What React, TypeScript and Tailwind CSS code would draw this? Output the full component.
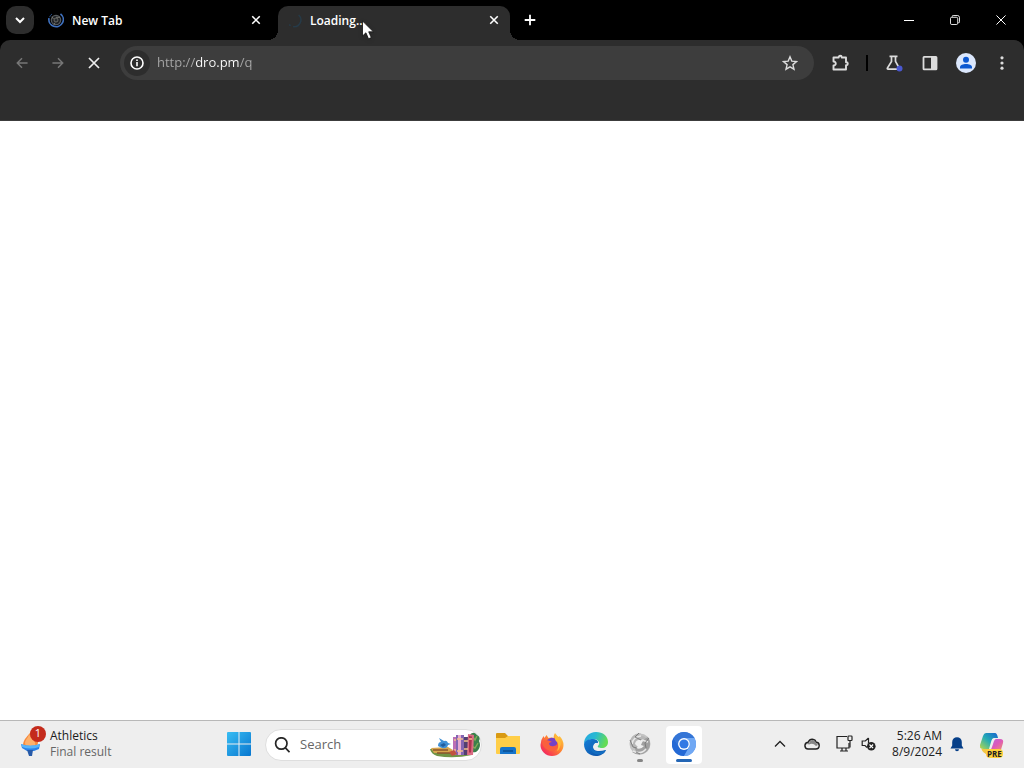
import React, { useState } from "react";

function CrossIcon({ className, weight }: { className: string; weight: number }) {
  return (
    <svg viewBox="0 0 16 16" className={className} fill="none" stroke="currentColor" strokeWidth={weight} aria-hidden="true">
      <path d="M3 3l10 10M13 3L3 13" />
    </svg>
  );
}

function TabStrip() {
  return (
    <header className="flex h-10 bg-black text-white">
      <button aria-label="Search tabs" className="ml-1.5 mt-1.5 flex size-7 items-center justify-center rounded-[10px] bg-[#2d2d2d]">
        <svg viewBox="0 0 12 12" className="size-3" fill="none" stroke="currentColor" strokeWidth="2" aria-hidden="true">
          <path d="M2 4l4 4 4-4" />
        </svg>
      </button>
      <div className="flex" aria-label="Open tabs">
        <div className="flex w-[234px] items-center pl-3.5 pr-1">
          <svg viewBox="0 0 16 16" className="mr-2 size-4 shrink-0" fill="none" aria-hidden="true">
            <circle cx="8" cy="8" r="4.7" fill="#202225" stroke="#555a5e" strokeWidth="1.2" />
            <path d="M8 5.3h4M5.4 7L4 4.7M7 10.7l-1 2" stroke="#73756f" strokeWidth="1" />
            <circle cx="8" cy="8" r="2" fill="#25292f" stroke="#777970" strokeWidth=".8" />
            <path d="M12.500 1.800A7.200 7.200 0 1 1 1 6.200" stroke="#3f71bf" strokeWidth="1.700" />
            <path d="M1.500 5.200A7 7 0 0 1 4 2" stroke="#284d85" strokeWidth="1" />
          </svg>
          <button className="flex-1 pt-px text-left text-xs font-semibold">New Tab</button>
          <button aria-label="Close New Tab" className="flex size-4 items-center justify-center">
            <CrossIcon className="size-3" weight={2.1} />
          </button>
        </div>
        <span className="h-2.5 w-2.5 self-end bg-[radial-gradient(circle_at_0_0,transparent_10px,#2d2d2d_10px)]" />
        <div className="mt-1.5 flex w-[232px] items-center rounded-t-[10px] bg-[#2d2d2d] pb-1.5 pl-2 pr-2">
          <svg viewBox="0 0 16 16" className="mr-2 size-4 shrink-0" fill="none" stroke="#263b49" strokeWidth="1.4" aria-hidden="true">
            <path d="M12.600 3A6.700 6.700 0 0 1 7 14.600M4.600 13.600l-1.400-1" />
          </svg>
          <button aria-current="page" className="relative flex-1 pt-px text-left text-xs font-semibold">
            Loading...
            <svg viewBox="0 0 14 21" className="pointer-events-none absolute left-[51px] top-2 h-[21px] w-3.5 drop-shadow-sm" aria-hidden="true">
              <path d="M1.500 1v15l3.400-3.200 2.600 6 2.800-1.200-2.600-5.800h4.700z" fill="#fff" stroke="#111" strokeWidth=".8" />
            </svg>
          </button>
          <button aria-label="Close Loading tab" className="flex size-4 items-center justify-center">
            <CrossIcon className="size-3" weight={2.1} />
          </button>
        </div>
        <span className="h-2.5 w-2.5 self-end bg-[radial-gradient(circle_at_100%_0,transparent_10px,#2d2d2d_10px)]" />
      </div>
      <button aria-label="New tab" className="flex w-5 items-center justify-center">
        <svg viewBox="0 0 12 12" className="size-3" stroke="currentColor" strokeWidth="1.8" aria-hidden="true">
          <path d="M6 .7v10.600M.7 6h10.600" />
        </svg>
      </button>
      <div className="ml-auto flex">
        <button aria-label="Minimize" className="flex w-[46px] items-center justify-center">
          <svg viewBox="0 0 10 10" className="size-2.5" stroke="currentColor" aria-hidden="true"><path d="M0 5.500h10" /></svg>
        </button>
        <button aria-label="Restore" className="flex w-[46px] items-center justify-center">
          <svg viewBox="0 0 11 11" className="size-2.5" fill="none" stroke="currentColor" aria-hidden="true">
            <rect x=".5" y="2.500" width="8" height="8" rx="1.500" />
            <path d="M2.500 2V1.500a1 1 0 0 1 1-1H8A2.500 2.500 0 0 1 10.500 3v4.500a1 1 0 0 1-1 1H9" />
          </svg>
        </button>
        <button aria-label="Close" className="flex w-[46px] items-center justify-center">
          <svg viewBox="0 0 11 11" className="size-2.5" stroke="currentColor" strokeWidth="1.100" aria-hidden="true"><path d="M.5.5l10 10M10.500 .5l-10 10" /></svg>
        </button>
      </div>
    </header>
  );
}

function ArrowIcon({ className }: { className: string }) {
  return (
    <svg viewBox="0 0 14 14" className={className} fill="none" stroke="currentColor" strokeWidth="1.700" aria-hidden="true">
      <path d="M13.500 7H1.800M7 1.500L1.500 7 7 12.500" />
    </svg>
  );
}

function Toolbar() {
  const [address, setAddress] = useState("http://dro.pm/q");
  return (
    <div className="bg-black">
      <nav aria-label="Browser toolbar" className="flex h-[81px] items-start rounded-t-[10px] border-b border-[#3c3c3c] bg-[#2d2d2d] px-1 pt-1.5 text-[#dcdcdc]">
        <button aria-label="Back" className="flex h-[34px] w-9 items-center justify-center text-[#777]"><ArrowIcon className="size-3" /></button>
        <button aria-label="Forward" className="flex h-[34px] w-9 items-center justify-center text-[#777]"><ArrowIcon className="size-3 rotate-180" /></button>
        <button aria-label="Stop loading" className="mr-2 flex h-[34px] w-9 items-center justify-center text-[#eee]"><CrossIcon className="size-4" weight={1.7} /></button>
        <div className="flex h-[34px] flex-1 items-center rounded-full bg-[#3d3d3d] pl-1 pr-3.5">
          <button aria-label="View site information" className="mr-[7px] flex size-[26px] items-center justify-center rounded-full bg-[#2d2d2d] text-white">
            <svg viewBox="0 0 14 14" className="size-3.5" fill="none" stroke="currentColor" strokeWidth="1.600" aria-hidden="true">
              <circle cx="7" cy="7" r="6" /><path d="M7 6v4.200M7 3.500v1.500" />
            </svg>
          </button>
          <input
            aria-label="Address"
            value={address}
            onChange={(e) => setAddress(e.target.value)}
            className="min-w-0 flex-1 bg-[linear-gradient(90deg,#a9a9a9_38px,#fff_38px,#fff_82px,#a9a9a9_82px)] bg-clip-text text-[13px] text-transparent caret-white outline-none"
          />
          <button aria-label="Bookmark this page" className="flex size-5 items-center justify-center">
            <svg viewBox="0 0 16 16" className="size-4" fill="none" stroke="currentColor" strokeWidth="1.400" aria-hidden="true">
              <path d="M8 1.800l1.800 4.300 4.700.4-3.600 3.100 1.100 4.600L8 11.800l-4 2.400 1.100-4.600-3.600-3.100 4.700-.4z" />
            </svg>
          </button>
        </div>
        <div className="ml-2 flex h-[34px] items-center">
          <button aria-label="Extensions" className="flex w-9 items-center justify-center">
            <svg viewBox="0 0 18 18" className="size-[18px]" fill="none" stroke="currentColor" strokeWidth="1.900" strokeLinejoin="round" aria-hidden="true">
              <path d="M2.500 3.500h5.200v-.3a1.500 1.500 0 0 1 3 0v.3H15v4.700h.3a1.500 1.500 0 0 1 0 3H15v4.300H2.500v-4c3 .2 3-4.200 0-4z" />
            </svg>
          </button>
          <span className="mx-2 h-4 w-0.5 bg-black" />
          <button aria-label="Labs" className="flex w-9 items-center justify-center">
            <svg viewBox="0 0 18 18" className="size-[18px]" fill="none" stroke="currentColor" strokeWidth="1.700" aria-hidden="true">
              <path d="M4.500 2.400h8M6.500 2.400v5L2.400 14q-.4 1.100.7 1.200h10.500q1.300-.1.600-1.200L10.500 7.400v-5" />
              <circle cx="14.500" cy="14.500" r="3" fill="#4a58cf" stroke="none" />
            </svg>
          </button>
          <button aria-label="Side panel" className="flex w-9 items-center justify-center">
            <svg viewBox="0 0 16 16" className="size-4" fill="none" aria-hidden="true">
              <rect x="1.500" y="1.800" width="13" height="12.500" rx=".6" stroke="currentColor" strokeWidth="1.800" /><path d="M9 2h5v12H9z" fill="currentColor" />
            </svg>
          </button>
          <button aria-label="Profile" className="flex w-9 items-center justify-center">
            <svg viewBox="0 0 20 20" className="size-5" aria-hidden="true">
              <circle cx="10" cy="10" r="10" fill="#dbe7fc" /><circle cx="10" cy="6.700" r="3" fill="#0b57d0" /><path d="M4 15.500v-1.400c0-2 3-3.200 6-3.200s6 1.200 6 3.200v1.400z" fill="#0b57d0" />
            </svg>
          </button>
          <button aria-label="Menu" className="flex w-9 items-center justify-center">
            <svg viewBox="0 0 4 16" className="h-4 w-1" fill="currentColor" aria-hidden="true"><circle cx="2" cy="2.800" r="1.600" /><circle cx="2" cy="8" r="1.600" /><circle cx="2" cy="13.200" r="1.600" /></svg>
          </button>
        </div>
      </nav>
    </div>
  );
}

function TorchIcon() {
  return (
    <svg viewBox="0 0 24 28" className="h-7 w-6" aria-hidden="true">
      <path d="M11 1C9 6 3 8 3 16h14c4-7-4-9-6-15z" fill="#f7893b" />
      <path d="M9 4C8 10 3 10 6 16h9c2-5-4-6-6-12z" fill="#fdb06b" />
      <path d="M1 14q9 4 19 0l-1 5-5 2H7l-5-3z" fill="#2980e8" /><path d="M1 14q9 3 19 0l-1 3q-9 3-17 0z" fill="#56b3fa" />
      <path d="M7 20h6l-1 6H9z" fill="#275aa8" />
    </svg>
  );
}

function WindowsIcon() {
  return (
    <svg viewBox="0 0 24 24" className="size-6" aria-hidden="true">
      <defs><linearGradient id="win" x1="0" y1="0" x2="1" y2="1"><stop stopColor="#38bdf3" /><stop offset="1" stopColor="#0876cf" /></linearGradient></defs>
      <path d="M0 1q0-1 1-1h10.500v11.500H0zM12.500 0H23q1 0 1 1v10.500H12.500zM0 12.500h11.500V24H1q-1 0-1-1zM12.500 12.500H24V23q0 1-1 1H12.500z" fill="url(#win)" />
    </svg>
  );
}

function BooksIcon() {
  return (
    <svg viewBox="0 0 52 26" className="h-[26px] w-[52px]" aria-hidden="true">
      <path d="M1 17h20l2 3 20 1v2q-18 4-35 1Q2 22 1 17z" fill="#719447" />
      <path d="M2 16l17-1 5 3-3 3H5z" fill="#d7a64e" /><path d="M4 18h15M8 21h14" stroke="#8a542d" strokeWidth="1.500" />
      <path d="M9 14q0-4 3-4l-2-4 5 3q3-1 4 2l3 1-3 1q-1 4-6 3z" fill="#3e8fd5" /><path d="M11 13l4-2 2 2-3 2z" fill="#205d9e" />
      <path d="M40 4q4-6 8-1 4 2 2 6 3 6-3 11-6 1-8-2z" fill="#39804b" /><path d="M43 3l3 5 2-4M42 14l4 2 3-5" stroke="#82ad58" strokeWidth="1.400" fill="none" />
      <path d="M24 5h4v18h-4z" fill="#bc6eb5" /><path d="M27 3h8v20h-8z" fill="#8366b3" /><path d="M29 3h3v20h-3z" fill="#e8acd0" />
      <path d="M35 5h5v18h-5z" fill="#51406f" /><path d="M39 2l6 1-1 20h-6z" fill="#d96c83" /><path d="M40 4l3 .5-1 16h-2z" fill="#ac344f" />
      <path d="M25 8h2m1-1h6m1 2h4m1-2h3M25 18h2m1 1h6m1-2h4" stroke="#f2c08c" strokeWidth="1.300" />
      <path d="M20 20l5-2 3 4-5 2z" fill="#c0533f" />
    </svg>
  );
}

function FolderIcon() {
  return (
    <svg viewBox="0 0 24 24" className="size-6" aria-hidden="true">
      <path d="M0 2q0-1 1-1h8l3 3h11q1 0 1 1v10H0z" fill="#d99a13" /><path d="M0 6h9l3-2h12v17q0 1-1 1H1q-1 0-1-1z" fill="#ffce48" />
      <path d="M4 22v-5q0-2 2-2h12q2 0 2 2v5z" fill="#1674ca" /><path d="M7 19h10" stroke="#0a4e90" strokeWidth="1.500" />
    </svg>
  );
}

function FirefoxIcon() {
  return (
    <svg viewBox="0 0 24 24" className="size-6" aria-hidden="true">
      <defs><linearGradient id="fox" x1="1" y1="0" x2="0" y2="1"><stop stopColor="#ffdf43" /><stop offset=".45" stopColor="#ff8332" /><stop offset=".8" stopColor="#f73554" /><stop offset="1" stopColor="#d62785" /></linearGradient></defs>
      <path d="M15 1q2 3 4 4l.5-1q4 4 4 9A11.500 11 0 0 1 .5 13q0-5 3-9l1 2 2-3 2 3q3-1 5 0 0-3 1.500-5z" fill="url(#fox)" />
      <circle cx="12" cy="11.500" r="5.800" fill="#7442c7" /><path d="M2 10q4-3 8-1l2 1q-3 0-3 2 1 3 5 2 4-1 3-4 3 3 0 7-4 4-9 1-5-2-6-8z" fill="#fa603d" />
      <path d="M16 3q7 6 4 12-1 3-3 4 3-7-1-10-2-2 0-6z" fill="#ffbd38" />
    </svg>
  );
}

function EdgeIcon() {
  return (
    <svg viewBox="0 0 24 24" className="size-6" aria-hidden="true">
      <defs>
        <linearGradient id="edge-a" x1="0" y1="0" x2="1" y2=".3"><stop stopColor="#26a6e3" /><stop offset=".5" stopColor="#28b9d2" /><stop offset="1" stopColor="#64dc55" /></linearGradient>
        <linearGradient id="edge-b" x1="0" y1="0" x2="1" y2="1"><stop stopColor="#137fd8" /><stop offset="1" stopColor="#0c4ba0" /></linearGradient>
      </defs>
      <path d="M0 12C0 5 5 0 12 0c7 0 12 4 12 10 0 4-3 6-6 6-3 0-5-1-4-2 3-3 0-7-4-7-5 0-9 2-10 5z" fill="url(#edge-a)" />
      <path d="M0 12c1-4 5-5 9-5 3 0 5 2 5 4-3-1-5 1-5 4 0 4 5 5 13 3-2 4-6 6-10 6C5 24 0 19 0 12z" fill="url(#edge-b)" />
      <path d="M6 14c0-4 3-6 6-6 1 0 2 1 2 3-3-1-5 1-5 4 0 5 7 6 13 3l-2 3C13 25 6 21 6 14z" fill="#126dc1" />
    </svg>
  );
}

function SyncIcon() {
  return (
    <svg viewBox="0 0 24 24" className="size-6" fill="none" aria-hidden="true">
      <circle cx="12" cy="12" r="8" stroke="#c3c3c3" strokeWidth="5" />
      <path d="M2 13C1 5 7 1 13 1l-3 3q6-1 9 3l-5 1Q8 7 7 12l3 3q-5 2-8-2z" fill="#b7b7b7" />
      <path d="M20 5q5 9-2 15-7 5-14 0l4-1-2-4q6 4 10-1l-3-1q2-6 7-8z" fill="#a0a0a0" />
      <path d="M4 12q1-7 9-8M5 19q8 4 13-2M14 8l6 2" stroke="#e7e7e7" strokeWidth="1.500" />
      <path d="M2 8l3 7 4 1M11 1L7 5l6 3M21 6l-4 5 1 5M8 20l4 2" stroke="#777" strokeWidth=".9" />
    </svg>
  );
}

function ChromiumIcon() {
  return (
    <svg viewBox="0 0 24 24" className="size-6" aria-hidden="true">
      <circle cx="12" cy="12" r="12" fill="#4788e8" /><path d="M1.500 6A12 12 0 0 0 12 24l5-9H7z" fill="#2469d5" />
      <path d="M1.600 6A12 12 0 0 1 22.400 6H12a6 6 0 0 0-5.200 9z" fill="#3475d6" /><path d="M12 6h10.400A12 12 0 0 1 12 24l5.200-9A6 6 0 0 0 12 6z" fill="#70a8f4" />
      <circle cx="12" cy="12" r="5.900" fill="#fff" /><circle cx="12" cy="12" r="4.600" fill="#3379e4" />
    </svg>
  );
}

function CopilotIcon() {
  return (
    <svg viewBox="0 0 24 24" className="size-6" aria-hidden="true">
      <defs><linearGradient id="co-a" x1="1" y1="0" x2="0" y2="1"><stop stopColor="#1762ce" /><stop offset=".5" stopColor="#24acb5" /><stop offset="1" stopColor="#b7d84c" /></linearGradient><linearGradient id="co-b" x1="0" y1="0" x2="1" y2="1"><stop stopColor="#a46be9" /><stop offset=".5" stopColor="#dd59ba" /><stop offset="1" stopColor="#f8aa48" /></linearGradient></defs>
      <path d="M6 1h9q2 0 3 5h-4q-2 0-3 4l-2 7H3q-4 0-3-4L3 4q1-3 3-3z" fill="url(#co-a)" />
      <path d="M16 7h4q4 0 3 4l-3 10q-1 2-4 2H8q-3 0-3-5h5q1 0 2-3l2-6q1-2 2-2z" fill="url(#co-b)" />
      <path d="M0 13q0 4 3 4h7l-2 5q-5 0-7-6z" fill="#f3c744" />
    </svg>
  );
}

function TaskButton({ label, children, state = "idle" }: { label: string; children: React.ReactNode; state?: "idle" | "running" | "active" }) {
  return (
    <button aria-label={label} className={state === "active" ? "relative flex h-[38px] w-9 items-center justify-center rounded bg-white pb-0.5" : "relative flex h-[38px] w-9 items-center justify-center rounded pb-0.5"}>
      {children}
      {state === "running" && <span className="absolute bottom-0.5 h-[3px] w-1.5 rounded-full bg-[#858585]" />}
      {state === "active" && <span className="absolute bottom-0.5 h-[3px] w-4 rounded-full bg-[#2466b5]" />}
    </button>
  );
}

function Taskbar() {
  return (
    <footer className="flex h-12 items-center border-t border-[#b8b8b8] bg-[#eee] text-[#202020]">
      <div className="w-[221px] shrink-0 pb-0.5">
        <button className="flex items-center pl-5 text-left">
          <span className="relative mr-1.5"><TorchIcon />
            <span className="absolute -top-1 left-2.5 flex size-4 items-center justify-center rounded-full bg-[#c42b1c] text-[11px] text-white">1</span>
          </span>
          <span className="text-xs leading-4 text-[#666]"><span className="block text-[#1b1b1b]">Athletics</span>Final result</span>
        </button>
      </div>
      <div className="flex items-center gap-2">
        <TaskButton label="Start"><WindowsIcon /></TaskButton>
        <label className="flex h-8 w-[217px] items-center rounded-full border border-[#dedede] bg-white pl-2">
          <svg viewBox="0 0 16 16" className="mr-2.5 size-4 shrink-0" fill="none" stroke="#252525" strokeWidth="1.700" aria-hidden="true"><circle cx="7.300" cy="6.500" r="5.700" /><path d="M11.200 10.700l4.300 4.500" /></svg>
          <input type="search" aria-label="Search" placeholder="Search" className="w-0 min-w-0 flex-1 bg-transparent text-[13px] outline-none placeholder:text-[#666]" />
          <BooksIcon />
        </label>
        <TaskButton label="File Explorer"><FolderIcon /></TaskButton>
        <TaskButton label="Firefox"><FirefoxIcon /></TaskButton>
        <TaskButton label="Microsoft Edge"><EdgeIcon /></TaskButton>
        <TaskButton label="Sync tool" state="running"><SyncIcon /></TaskButton>
        <TaskButton label="Chromium" state="active"><ChromiumIcon /></TaskButton>
      </div>
      <div className="ml-auto flex items-center pb-0.5 pr-5">
        <button aria-label="Show hidden icons" className="mr-4 flex w-4 justify-center">
          <svg viewBox="0 0 12 8" className="h-2 w-3" fill="none" stroke="currentColor" strokeWidth="1.300" aria-hidden="true"><path d="M1 6.500l5-5 5 5" /></svg>
        </button>
        <button aria-label="OneDrive" className="mr-4">
          <svg viewBox="0 0 16 12" className="h-3 w-4" aria-hidden="true"><path d="M1 8.500Q.5 5 4 4.300 6 .5 9.500 1.500q2 .5 2.700 2.800 3 .2 3 3.200 0 3.500-3.500 3.500H4Q1.500 11 1 8.500z" fill="#eee" stroke="#222" strokeWidth="1.400" /><path d="M2 6.500q2-1 3 0 4-2 7 1.500l2-1-2-2.500Q11 1.500 8 2 6 2.500 5 5 3 4.500 2 6.500z" fill="#888" /></svg>
        </button>
        <button aria-label="Network and volume" className="mr-4 flex items-center gap-2">
          <svg viewBox="0 0 17 17" className="size-[17px]" fill="none" stroke="#222" strokeWidth="1.200" aria-hidden="true"><path d="M11 1.500H1v11.500h12V8M6 13v2.500M10 13v2.500M4 16h8" /><rect x="12" y="1" width="4" height="4.500" rx=".7" /><path d="M14 5.500v7" /></svg>
          <svg viewBox="0 0 15 15" className="size-[15px]" fill="none" stroke="#222" strokeWidth="1.200" aria-hidden="true"><path d="M7.500 2v5M7.500 2L4.300 5H1.200v4.500H4l2 2" /><circle cx="10.300" cy="10.300" r="4.300" fill="#222" stroke="none" /><path d="M8.500 8.500l3.600 3.600m0-3.600l-3.600 3.600" stroke="#fff" /></svg>
        </button>
        <button aria-label="Clock and notifications" className="mr-4 flex items-center gap-2">
          <span className="text-right text-xs leading-4"><span className="block">5:26 AM</span>8/9/2024</span>
          <svg viewBox="0 0 14 16" className="h-4 w-3.5" fill="#063f88" aria-hidden="true"><path d="M2.200 6a4.800 4.800 0 0 1 9.600 0v3.500l1.700 3H.5l1.700-3zM5 13.200h4a2 2 0 0 1-4 0z" /></svg>
        </button>
        <button aria-label="Copilot preview" className="relative">
          <CopilotIcon />
          <span className="absolute -bottom-0.5 left-1.5 rounded-sm bg-[#ffd13d] px-px text-[8px] font-bold leading-[9px]">PRE</span>
        </button>
      </div>
    </footer>
  );
}

export default function App() {
  return (
    <div className="flex min-h-screen flex-col bg-white font-['Open_Sans','Noto_Sans',sans-serif]">
      <TabStrip />
      <Toolbar />
      <main className="flex-1 bg-white" aria-label="Page content" />
      <Taskbar />
    </div>
  );
}
